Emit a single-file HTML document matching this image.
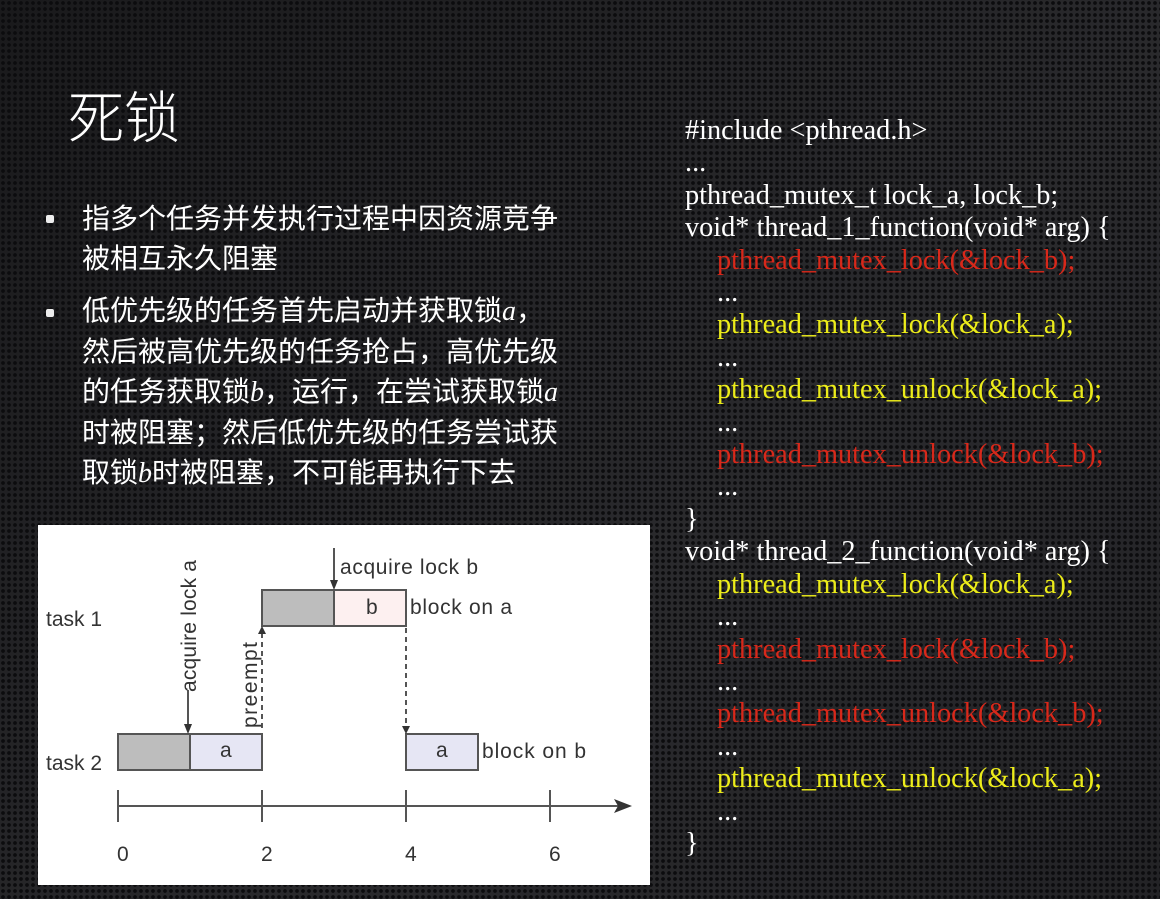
<!DOCTYPE html>
<html><head><meta charset="utf-8"><style>
html,body{margin:0;padding:0}
body{width:1160px;height:899px;overflow:hidden;position:relative;
background-color:#1b1b1d;
background-image:radial-gradient(circle at 50% 50%, #0c0c0e 0, #0c0c0e 1.6px, rgba(0,0,0,0) 2.2px),
linear-gradient(135deg,#1a1a1c 0%,#2a2a2d 60%,#232326 100%);
background-size:6px 6px,100% 100%;
font-family:"Liberation Sans","Noto Sans CJK SC",sans-serif;color:#fff}
.title{position:absolute;left:68px;top:87px;font-size:56px;font-weight:300;line-height:64px}
.bul{position:absolute;left:82px;font-size:28px;line-height:40px;color:#fff;width:520px;white-space:nowrap}
.bul i{font-family:"Liberation Serif",serif}
.dot{position:absolute;left:46px;width:8px;height:8px;background:#eee;border-radius:2px}
.code{position:absolute;left:685px;top:115px;font-family:"Liberation Serif",serif;font-size:28.3px;line-height:32.4px;white-space:pre;color:#fff}
.code span{padding-left:32px}
.r{color:#d8281a}.y{color:#ecec1a}
</style></head><body>
<div class="title">死锁</div>
<div class="dot" style="top:215px"></div>
<div class="bul" style="top:199px">指多个任务并发执行过程中因资源竞争<br>被相互永久阻塞</div>
<div class="dot" style="top:309px"></div>
<div class="bul" style="top:291px">低优先级的任务首先启动并获取锁<i>a</i>，<br>然后被高优先级的任务抢占，高优先级<br>的任务获取锁<i>b</i>，运行，在尝试获取锁<i>a</i><br>时被阻塞；然后低优先级的任务尝试获<br>取锁<i>b</i>时被阻塞，不可能再执行下去</div>
<div class="code">#include &lt;pthread.h&gt;
...
pthread_mutex_t lock_a, lock_b;
void* thread_1_function(void* arg) {
<span class="r">pthread_mutex_lock(&amp;lock_b);</span>
<span>...</span>
<span class="y">pthread_mutex_lock(&amp;lock_a);</span>
<span>...</span>
<span class="y">pthread_mutex_unlock(&amp;lock_a);</span>
<span>...</span>
<span class="r">pthread_mutex_unlock(&amp;lock_b);</span>
<span>...</span>
}
void* thread_2_function(void* arg) {
<span class="y">pthread_mutex_lock(&amp;lock_a);</span>
<span>...</span>
<span class="r">pthread_mutex_lock(&amp;lock_b);</span>
<span>...</span>
<span class="r">pthread_mutex_unlock(&amp;lock_b);</span>
<span>...</span>
<span class="y">pthread_mutex_unlock(&amp;lock_a);</span>
<span>...</span>
}</div>
<svg style="position:absolute;left:0;top:0" width="1160" height="899" font-family="Liberation Sans, sans-serif" font-size="21" fill="#333">
<rect x="38" y="525" width="612" height="360" fill="#fff"/>
<g stroke="#555" stroke-width="2">
<rect x="118" y="734" width="72" height="36" fill="#bdbdbd"/>
<rect x="190" y="734" width="72" height="36" fill="#e6e6f4"/>
<rect x="262" y="590" width="72" height="36" fill="#bdbdbd"/>
<rect x="334" y="590" width="72" height="36" fill="#fdf0f0"/>
<rect x="406" y="734" width="72" height="36" fill="#e6e6f4"/>
<line x1="118" y1="806" x2="620" y2="806"/>
<line x1="118" y1="790" x2="118" y2="822"/>
<line x1="262" y1="790" x2="262" y2="822"/>
<line x1="406" y1="790" x2="406" y2="822"/>
<line x1="550" y1="790" x2="550" y2="822"/>
<line x1="334" y1="548" x2="334" y2="584"/>
<line x1="188" y1="690" x2="188" y2="728"/>
<line x1="262" y1="728" x2="262" y2="632" stroke-dasharray="5 4"/>
<line x1="406" y1="628" x2="406" y2="728" stroke-dasharray="5 4"/>
</g>
<g fill="#333">
<path d="M632 806 L614 799 L618 806 L614 813 Z"/>
<path d="M334 590 L330 580 L338 580 Z"/>
<path d="M188 734 L184 724 L192 724 Z"/>
<path d="M262 626 L258 634 L266 634 Z"/>
<path d="M406 734 L402 726 L410 726 Z"/>
</g>
<text x="46" y="626">task 1</text>
<text x="46" y="770">task 2</text>
<text x="340" y="574" textLength="138">acquire lock b</text>
<text x="410" y="614" textLength="102">block on a</text>
<text x="482" y="758" textLength="104">block on b</text>
<text x="220" y="757">a</text>
<text x="436" y="757">a</text>
<text x="366" y="614">b</text>
<text x="117" y="861">0</text><text x="261" y="861">2</text><text x="405" y="861">4</text><text x="549" y="861">6</text>
<text transform="translate(196,692) rotate(-90)" textLength="132">acquire lock a</text>
<text transform="translate(257,728) rotate(-90)" textLength="86">preempt</text>
</svg>
</body></html>
